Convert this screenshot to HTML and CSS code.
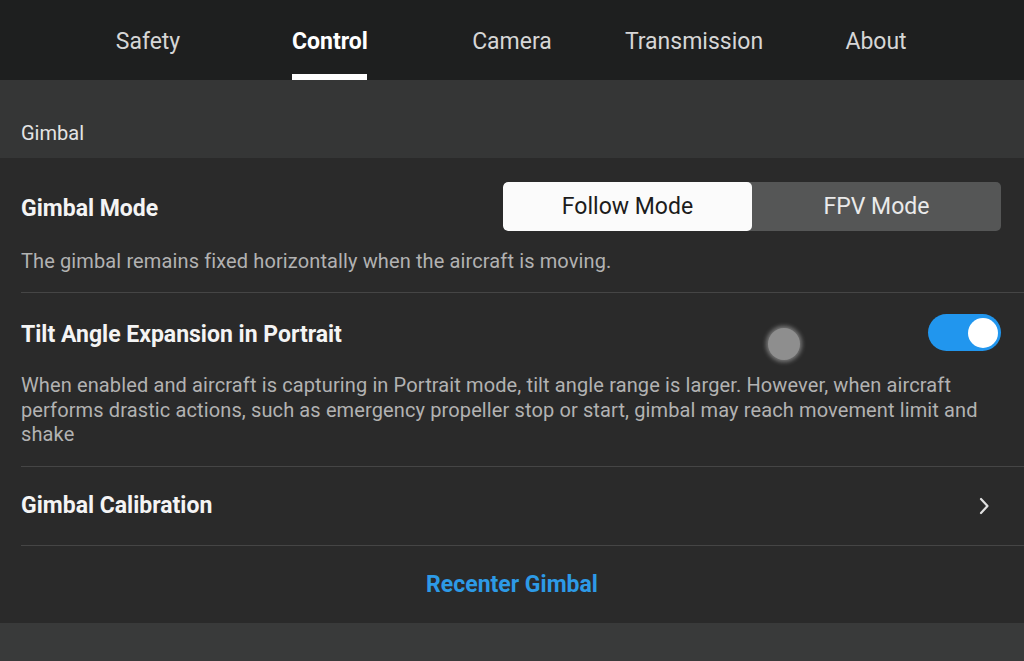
FILE: index.html
```html
<!DOCTYPE html>
<html lang="en">
<head>
<meta charset="utf-8">
<title>Control - Gimbal</title>
<link rel="stylesheet" href="styles.css">
</head>
<body>
<div class="screen">
  <nav class="tabs">
    <div class="tab">Safety</div>
    <div class="tab active">Control</div>
    <div class="tab">Camera</div>
    <div class="tab">Transmission</div>
    <div class="tab">About</div>
  </nav>
  <div class="section-header">Gimbal</div>
  <div class="content">
    <div class="item">
      <div class="item-head">
        <div class="item-title title-low">Gimbal Mode</div>
        <div class="segmented">
          <div class="seg seg-on">Follow Mode</div>
          <div class="seg">FPV Mode</div>
        </div>
      </div>
      <p class="desc desc-single">The gimbal remains fixed horizontally when the aircraft is moving.</p>
    </div>
    <div class="item item-tilt">
      <div class="item-head">
        <div class="item-title title-low">Tilt Angle Expansion in Portrait</div>
        <div class="toggle"><span class="knob"></span></div>
      </div>
      <p class="desc desc-multi">When enabled and aircraft is capturing in Portrait mode, tilt angle range is larger. However, when aircraft performs drastic actions, such as emergency propeller stop or start, gimbal may reach movement limit and shake</p>
    </div>
    <div class="item item-link">
      <div class="item-title">Gimbal Calibration</div>
      <svg class="chevron" width="14" height="20" viewBox="0 0 14 20"><path d="M4 3 L10.5 10 L4 17" fill="none" stroke="#e0e0e0" stroke-width="2.2" stroke-linecap="round" stroke-linejoin="round"/></svg>
    </div>
    <div class="action">Recenter Gimbal</div>
  </div>
  <div class="footer-band"></div>
  <div class="touch-dot"></div>
</div>
</body>
</html>
```
FILE: styles.css
```css
* { box-sizing: border-box; }
html, body {
  margin: 0;
  padding: 0;
  background: #2a2a2a;
}
body {
  font-family: Roboto, "Liberation Sans", Arial, sans-serif;
  color: #f2f2f2;
}
.screen {
  position: relative;
  width: 1024px;
  height: 661px;
  overflow: hidden;
  display: flex;
  flex-direction: column;
}
.tabs {
  height: 80px;
  background: #1e1f1f;
  display: flex;
  justify-content: center;
  flex-shrink: 0;
}
.tab {
  width: 182px;
  text-align: center;
  font-size: 23px;
  line-height: 26px;
  padding-top: 29px;
  color: #d6d6d6;
  position: relative;
}
.tab.active {
  color: #ffffff;
  font-weight: 700;
}
.tab.active::after {
  content: "";
  position: absolute;
  left: 50%;
  bottom: 0;
  width: 75px;
  margin-left: -38px;
  height: 6px;
  background: #ffffff;
}
.section-header {
  height: 78px;
  background: #353636;
  padding: 41px 0 0 21px;
  font-size: 20px;
  line-height: 24px;
  color: #e4e4e4;
  flex-shrink: 0;
}
.content {
  background: #2a2a2a;
  padding-left: 21px;
  flex: 1;
  display: flex;
  flex-direction: column;
}
.item {
  border-bottom: 1px solid #454545;
  padding-right: 23px;
}
.item-head {
  display: flex;
  align-items: center;
  justify-content: space-between;
}
.item:first-child .item-head {
  padding-top: 24px;
}
.item-title {
  font-size: 23px;
  font-weight: 700;
  color: #f4f4f4;
}
.title-low {
  padding-top: 3px;
}
.segmented {
  display: flex;
  width: 498px;
  height: 49px;
  border-radius: 5px;
  overflow: hidden;
  background: #555656;
}
.seg {
  flex: 1;
  display: flex;
  align-items: center;
  justify-content: center;
  font-size: 23px;
  color: #eaeaea;
}
.seg-on {
  background: #fbfbfb;
  color: #1c1c1c;
  border-radius: 5px;
}
.desc {
  margin: 0;
  font-size: 20px;
  letter-spacing: 0.12px;
  color: #b2b2b2;
}
.desc-single {
  line-height: 24px;
  margin-top: 18px;
  padding-bottom: 19px;
}
.item-tilt .item-head {
  padding-top: 21px;
}
.desc-multi {
  line-height: 24.5px;
  margin-top: 22px;
  padding-bottom: 19px;
}
.toggle {
  width: 73px;
  height: 37px;
  border-radius: 19px;
  background: #2196ee;
  display: flex;
  align-items: center;
  justify-content: flex-end;
  padding-right: 3px;
}
.knob {
  width: 30px;
  height: 30px;
  border-radius: 50%;
  background: #ffffff;
}
.item-link {
  height: 79px;
  display: flex;
  align-items: center;
  justify-content: space-between;
  padding-right: 33px;
}
.chevron {
  display: block;
}
.action {
  height: 77px;
  display: flex;
  align-items: center;
  justify-content: center;
  font-size: 23px;
  font-weight: 700;
  color: #2d9ae6;
  margin-left: -21px;
}
.footer-band {
  height: 38px;
  background: #393a3a;
  flex-shrink: 0;
}
.touch-dot {
  position: absolute;
  left: 768px;
  top: 328px;
  width: 32px;
  height: 32px;
  border-radius: 50%;
  background: #8e8e8e;
  box-shadow: 0 0 4px 2px rgba(220, 220, 220, 0.45);
}
```
